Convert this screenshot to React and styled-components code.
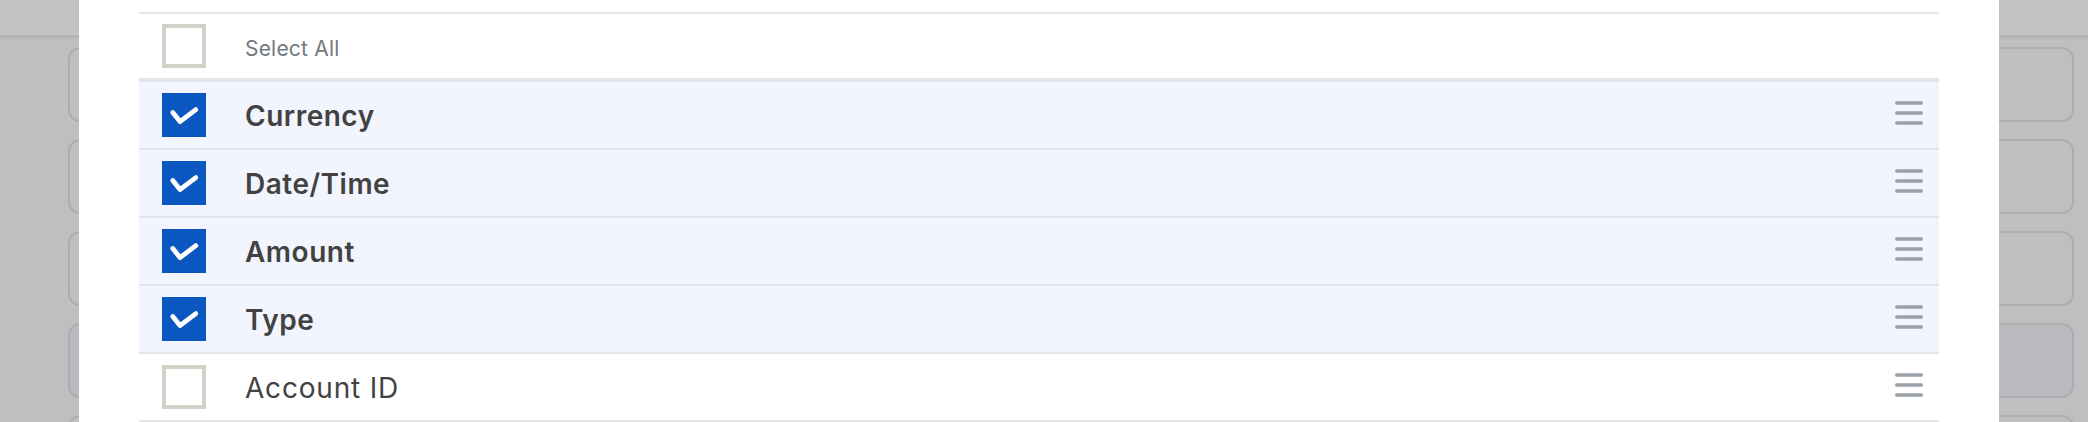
import React from "react";
import styled, { createGlobalStyle } from "styled-components";

const GlobalStyle = createGlobalStyle`
  html, body { margin: 0; padding: 0; }
  body {
    background: #bfbfbf;
    overflow: hidden;
    font-family: Inter, "Liberation Sans", Arial, sans-serif;
  }
  * { box-sizing: border-box; }
`;

const Backdrop = styled.div`
  width: 2088px;
  height: 422px;
  overflow: hidden;
  background: #bfbfbf;
  display: flex;
  flex-direction: column;
`;

const TopBar = styled.div`
  height: 36px;
  flex: none;
  background: #c3c3c3;
  box-shadow: 0 1px 3px rgba(0, 0, 0, 0.12);
  border-bottom: 1px solid #b9b9b9;
`;

const CardList = styled.div`
  display: flex;
  flex-direction: column;
  gap: 17px;
  padding: 11px 14px 0 68px;
`;

const Card = styled.div`
  height: 75px;
  flex: none;
  border: 2px solid #adadad;
  border-radius: 12px;
  background: ${(p) => (p.$active ? "#babbc0" : "#bfbfbf")};
`;

const Modal = styled.div`
  position: fixed;
  top: 0;
  bottom: 0;
  left: 79px;
  width: 1920px;
  overflow: hidden;
  background: #ffffff;
  padding: 12px 60px 0;
`;

const Table = styled.div`
  border-top: 2px solid #e6e6e8;
  display: flex;
  flex-direction: column;
`;

const HeadRow = styled.div`
  height: 68px;
  display: flex;
  align-items: center;
  padding: 0 16px 0 23px;
  background: #ffffff;
  border-bottom: 4px solid #e4e5e9;
`;

const Row = styled.div`
  height: 68px;
  display: flex;
  align-items: center;
  padding: 0 16px 0 23px;
  background: ${(p) => (p.$checked ? "#f2f5fd" : "#ffffff")};
  border-bottom: 2px solid #e4e5e9;
`;

const Box = styled.div`
  width: 44px;
  height: 44px;
  flex: none;
  display: flex;
  align-items: center;
  justify-content: center;
  background: ${(p) => (p.$checked ? "#0b57c1" : "#ffffff")};
  border: ${(p) => (p.$checked ? "none" : "4px solid #d4d0ca")};
`;

const SelectLabel = styled.span`
  margin-left: 39px;
  font-size: 21px;
  color: #737880;
  font-weight: 400;
  letter-spacing: 0.2px;
  padding-top: 5px;
`;

const Label = styled.span`
  margin-left: 39px;
  flex: 1;
  font-size: 28px;
  color: #424242;
  font-weight: ${(p) => (p.$checked ? 600 : 400)};
  letter-spacing: ${(p) => (p.$checked ? "0.5px" : "0.8px")};
  padding-top: 2px;
`;

const Handle = styled.svg`
  width: 28px;
  height: 24px;
  flex: none;
  margin-bottom: 5px;
`;

const Check = () => (
  <svg width="44" height="44" viewBox="0 0 44 44">
    <path
      d="M10.8 19.5 L18 28.6 L33.8 16.6"
      fill="none"
      stroke="#ffffff"
      strokeWidth="4.8"
      strokeLinecap="round"
      strokeLinejoin="round"
    />
  </svg>
);

const DragHandle = () => (
  <Handle viewBox="0 0 28 24">
    {[2, 12, 22].map((y) => (
      <line
        key={y}
        x1="1.7"
        x2="26.3"
        y1={y}
        y2={y}
        stroke="#9aa0a8"
        strokeWidth="3.4"
        strokeLinecap="round"
      />
    ))}
  </Handle>
);

const columns = [
  { name: "Currency", checked: true },
  { name: "Date/Time", checked: true },
  { name: "Amount", checked: true },
  { name: "Type", checked: true },
  { name: "Account ID", checked: false },
];

export default function App() {
  return (
    <>
      <GlobalStyle />
      <Backdrop>
        <TopBar />
        <CardList>
          <Card />
          <Card />
          <Card />
          <Card $active />
          <Card />
        </CardList>
      </Backdrop>
      <Modal>
        <Table>
          <HeadRow>
            <Box />
            <SelectLabel>Select All</SelectLabel>
          </HeadRow>
          {columns.map((c) => (
            <Row key={c.name} $checked={c.checked}>
              <Box $checked={c.checked}>{c.checked && <Check />}</Box>
              <Label $checked={c.checked}>{c.name}</Label>
              <DragHandle />
            </Row>
          ))}
        </Table>
      </Modal>
    </>
  );
}
